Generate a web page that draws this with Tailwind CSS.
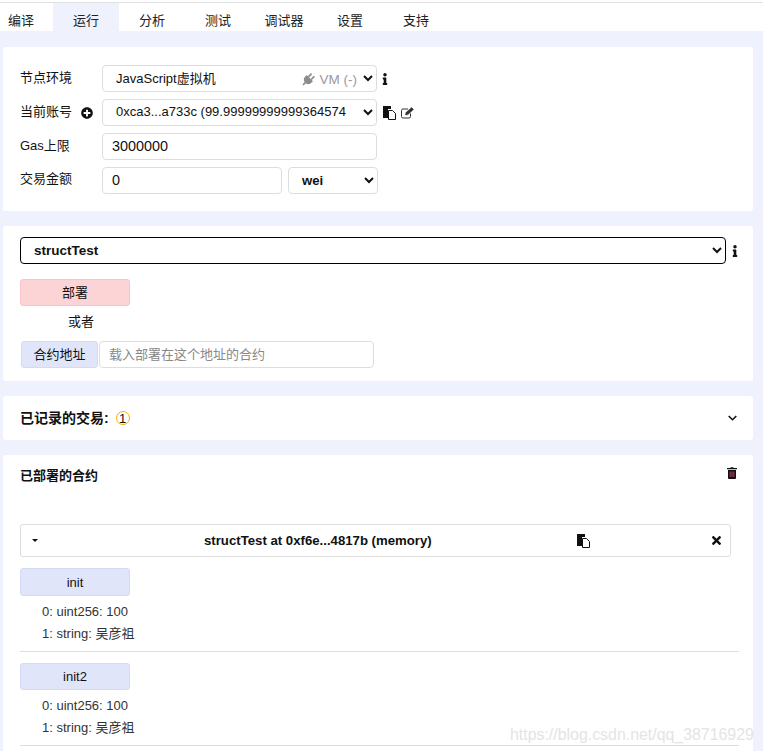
<!DOCTYPE html>
<html lang="zh-CN">

<head>
    <meta charset="UTF-8">
    <meta name="viewport" content="width=device-width, initial-scale=1.0">
    <title>Remix 运行</title>
    <script src="https://cdn.jsdelivr.net/npm/@tailwindcss/browser@4"></script>
</head>

<body class="bg-white text-[13px] text-[#111] font-['Liberation_Sans','Noto_Sans_CJK_SC',sans-serif]">
    <div class="relative h-[751px] overflow-hidden">
        <!-- Tabs -->
        <div class="h-[3px] border-b border-[#e0e0e0]"></div>
        <nav class="flex h-[28px] items-center text-[13px] text-[#222]">
            <a class="w-[53px] h-full pl-2 pt-[8px]">编译</a>
            <a class="w-[66px] h-full pt-[8px] text-center bg-[#eff1fd]">运行</a>
            <a class="w-[66px] h-full pt-[8px] text-center">分析</a>
            <a class="w-[66px] h-full pt-[8px] text-center">测试</a>
            <a class="w-[66px] h-full pt-[8px] text-center">调试器</a>
            <a class="w-[66px] h-full pt-[8px] text-center">设置</a>
            <a class="w-[66px] h-full pt-[8px] text-center">支持</a>
        </nav>

        <main class="bg-[#eff1fd] pl-[3px] pr-[10px] pt-[16px] flex flex-col gap-[15px] h-[720px]">
            <!-- Environment -->
            <section class="bg-white rounded-[3px] h-[164px] pl-[17px] pt-[18px] flex flex-col gap-[7px]">
                <div class="flex items-center h-[27px]">
                    <label class="w-[82px] pb-[2px]">节点环境</label>
                    <div class="relative">
                        <select class="w-[275px] h-[27px] pl-[9px] bg-white border border-[#ddd] rounded-[4px] text-[13px]">
                            <option>JavaScript虚拟机</option>
                        </select>
                        <div class="absolute right-[20px] top-[5px] flex items-center gap-[5px] text-[13.5px] text-[#9a9a9a]">
                            <svg class="w-[14px] h-[14px]" viewBox="0 0 16 16" fill="#8c8c8c"><g transform="rotate(45 8 8)"><rect x="4.800" y="0" width="2" height="5"/><rect x="9.200" y="0" width="2" height="5"/><path d="M3 5h10v2.500a5 5 0 0 1-4 4.900V16H7v-3.600a5 5 0 0 1-4-4.900z"/></g></svg>
                            <span>VM (-)</span>
                        </div>
                    </div>
                    <svg class="ml-[5px] w-[6px] h-[12px]" viewBox="0 0 192 512" fill="#111"><path d="M20 424.229h20V279.771H20c-11.046 0-20-8.954-20-20V212c0-11.046 8.954-20 20-20h112c11.046 0 20 8.954 20 20v212.229h20c11.046 0 20 8.954 20 20V492c0 11.046-8.954 20-20 20H20c-11.046 0-20-8.954-20-20v-47.771c0-11.046 8.954-20 20-20zM96 0C56.235 0 24 32.235 24 72s32.235 72 72 72 72-32.235 72-72S135.764 0 96 0z"/></svg>
                </div>
                <div class="flex items-center h-[27px]">
                    <label class="w-[61px] pb-[2px]">当前账号</label>
                    <svg class="w-[12px] h-[12px] mr-[9px]" viewBox="0 0 512 512" fill="#111"><path d="M256 8C119 8 8 119 8 256s111 248 248 248 248-111 248-248S393 8 256 8zm144 276c0 6.6-5.4 12-12 12h-92v92c0 6.600-5.400 12-12 12h-56c-6.600 0-12-5.400-12-12v-92h-92c-6.600 0-12-5.400-12-12v-56c0-6.600 5.400-12 12-12h92v-92c0-6.600 5.400-12 12-12h56c6.600 0 12 5.400 12 12v92h92c6.600 0 12 5.400 12 12v56z"/></svg>
                    <select class="w-[275px] h-[27px] pl-[9px] pb-[2px] bg-white border border-[#ddd] rounded-[4px] text-[13px]">
                        <option>0xca3...a733c (99.99999999999364574</option>
                    </select>
                    <svg class="ml-[6px] w-[13px] h-[14px]" viewBox="0 0 13 14"><path d="M0 0h8v3H5v9H0z" fill="#111"/><path d="M5.500 4.500h4l3 3v6h-7z" fill="#fff" stroke="#111"/></svg>
                    <svg class="ml-[5px] w-[13px] h-[12px]" viewBox="0 0 13 12" fill="none" stroke="#333"><path d="M9.500 6.500v3a1.500 1.500 0 0 1-1.500 1.500H2A1.500 1.500 0 0 1 .5 9.500V3.500A1.500 1.500 0 0 1 2 2h5"/><path d="M4.500 8 5 5.500 10.500.5l2 2L7 7.500z" fill="#333" stroke-width=".5"/></svg>
                </div>
                <div class="flex items-center h-[27px]">
                    <label class="w-[82px] pb-[2px]">Gas上限</label>
                    <input value="3000000" class="w-[275px] h-[27px] px-[9px] pb-[2px] border border-[#ddd] rounded-[4px] text-[14.4px]">
                </div>
                <div class="flex items-center h-[27px]">
                    <label class="w-[82px] pb-[3px]">交易金额</label>
                    <input value="0" class="w-[180px] h-[27px] px-[9px] pb-[2px] border border-[#ddd] rounded-[4px] text-[14.4px]">
                    <select class="ml-[6px] w-[90px] h-[27px] pl-[9px] bg-white border border-[#ddd] rounded-[4px] text-[13.2px] font-bold">
                        <option>wei</option>
                    </select>
                </div>
            </section>

            <!-- Contract select / deploy -->
            <section class="bg-white rounded-[3px] h-[155px] pl-[17px] pt-[11px]">
                <div class="flex items-center">
                    <select class="w-[706px] h-[27px] pl-[9px] bg-white border border-black rounded-[4px] text-[13.5px] font-bold">
                        <option>structTest</option>
                    </select>
                    <svg class="ml-[6px] w-[6px] h-[12px]" viewBox="0 0 192 512" fill="#111"><path d="M20 424.229h20V279.771H20c-11.046 0-20-8.954-20-20V212c0-11.046 8.954-20 20-20h112c11.046 0 20 8.954 20 20v212.229h20c11.046 0 20 8.954 20 20V492c0 11.046-8.954 20-20 20H20c-11.046 0-20-8.954-20-20v-47.771c0-11.046 8.954-20 20-20zM96 0C56.235 0 24 32.235 24 72s32.235 72 72 72 72-32.235 72-72S135.764 0 96 0z"/></svg>
                </div>
                <button class="block mt-[15px] w-[110px] h-[27px] pt-[1px] bg-[#fdd4d6] border border-[#fbc3c6] rounded-[3px]">部署</button>
                <div class="w-[122px] text-center mt-[7px] leading-[18px]">或者</div>
                <div class="flex items-center mt-[10px] ml-[1px]">
                    <button class="w-[77px] h-[27px] bg-[#e0e5f9] border border-[#d3daf5] rounded-[3px]">合约地址</button>
                    <input placeholder="载入部署在这个地址的合约" class="ml-[1px] w-[275px] h-[27px] px-[9px] border border-[#ddd] rounded-[4px] text-[13px] placeholder:text-[#888]">
                </div>
            </section>

            <!-- Transactions -->
            <section class="bg-white rounded-[3px] h-[44px] pl-[17px] pr-[17px] flex items-center justify-between">
                <div class="flex items-center gap-[7px]">
                    <b class="text-[14px]">已记录的交易:</b>
                    <span class="w-[14px] h-[14px] rounded-full border border-[#f5b000] flex items-center justify-center text-[13px] leading-none">1</span>
                </div>
                <svg class="w-[9px] h-[6px] mr-[-1px]" viewBox="0 0 9 6" fill="none" stroke="#111" stroke-width="1.600"><path d="M.7 1 4.500 4.700 8.300 1"/></svg>
            </section>

            <!-- Deployed contracts -->
            <section class="bg-white rounded-t-[3px] flex-1 pl-[17px] pr-[14px] pt-[13px]">
                <div class="flex justify-between items-start h-[56px]">
                    <b class="mt-[-2px]">已部署的合约</b>
                    <svg class="w-[10px] h-[12px] mr-[2px] mt-[-1px]" viewBox="0 0 10 12"><path d="M3.500 1V.3h3V1H10v1.300H0V1z" fill="#111"/><path d="M1 3h8v8a1 1 0 0 1-1 1H2a1 1 0 0 1-1-1z" fill="#111"/><path d="M3.200 4.500v5.500M5 4.500v5.500M6.800 4.500v5.500" stroke="#e8457f" stroke-width=".8"/></svg>
                </div>
                <div class="w-[711px] h-[33px] border border-[#ddd] rounded-[3px] flex items-center relative">
                    <span class="ml-[11px] w-0 h-0 border-x-[3px] border-x-transparent border-t-[3px] border-t-[#111]"></span>
                    <b class="ml-[166px] text-[13.2px]">structTest at 0xf6e...4817b (memory)</b>
                    <svg class="ml-[145px] w-[13px] h-[14px]" viewBox="0 0 13 14"><path d="M0 0h8v3H5v9H0z" fill="#111"/><path d="M5.500 4.500h4l3 3v6h-7z" fill="#fff" stroke="#111"/></svg>
                    <svg class="ml-[122px] w-[9px] h-[13px]" viewBox="0 0 352 512" fill="#111"><path d="M242.720 256l100.070-100.070c12.280-12.280 12.280-32.190 0-44.480l-22.240-22.240c-12.280-12.280-32.190-12.280-44.480 0L176 189.280 75.930 89.210c-12.280-12.280-32.190-12.280-44.480 0L9.210 111.450c-12.280 12.280-12.280 32.190 0 44.480L109.280 256 9.210 356.070c-12.280 12.280-12.280 32.190 0 44.480l22.240 22.240c12.280 12.280 32.200 12.280 44.480 0L176 322.720l100.070 100.070c12.280 12.280 32.200 12.280 44.480 0l22.240-22.240c12.280-12.280 12.280-32.190 0-44.480L242.720 256z"/></svg>
                </div>

                <button class="block mt-[11px] w-[110px] h-[28px] pt-[1px] bg-[#e0e5f9] border border-[#d3daf5] rounded-[3px]">init</button>
                <div class="pl-[22px] pt-[5px] text-[#333] leading-[22px]">
                    <div>0: uint256: 100</div>
                    <div>1: string: 吴彦祖</div>
                </div>
                <hr class="mt-[6px] border-[#ddd]">

                <button class="block mt-[11px] w-[110px] h-[27px] pt-[1px] bg-[#e0e5f9] border border-[#d3daf5] rounded-[3px]">init2</button>
                <div class="pl-[22px] pt-[5px] text-[#333] leading-[22px]">
                    <div>0: uint256: 100</div>
                    <div>1: string: 吴彦祖</div>
                </div>
                <hr class="mt-[6px] border-[#ddd]">
            </section>
        </main>

        <!-- CSDN watermark -->
        <div class="absolute left-[510px] top-[723px] text-[15.9px] text-[#e4e4e4] whitespace-nowrap">https://blog.csdn.net/qq_38716929</div>
    </div>
</body>

</html>
